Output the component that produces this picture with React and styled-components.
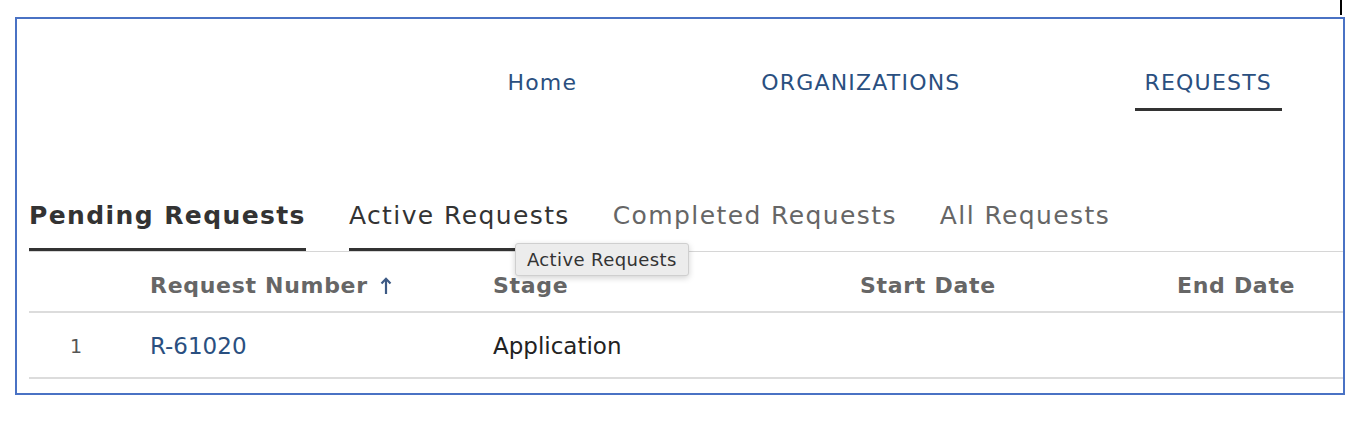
import React from "react";
import styled, { createGlobalStyle } from "styled-components";

const GlobalStyle = createGlobalStyle`
  body {
    margin: 0;
    background: #fff;
    font-family: "DejaVu Sans", Verdana, sans-serif;
  }
`;

const navItems = [
  { label: "Home" },
  { label: "ORGANIZATIONS" },
  { label: "REQUESTS", active: true },
];

const tabs = [
  { label: "Pending Requests", state: "selected" },
  { label: "Active Requests", state: "hover", tooltip: true },
  { label: "Completed Requests" },
  { label: "All Requests" },
];

const columns = ["", "Request Number", "Stage", "Start Date", "End Date"];

const rows = [{ index: 1, number: "R-61020", stage: "Application", start: "", end: "" }];

function SortArrow() {
  return (
    <svg width="14" height="18" viewBox="0 0 14 18" fill="none">
      <path d="M7 17V2" stroke="#3d5a85" strokeWidth="2.2" />
      <path d="M2.5 6.5L7 1.8l4.5 4.7" stroke="#3d5a85" strokeWidth="2.2" fill="none" />
    </svg>
  );
}

export default function App() {
  return (
    <>
      <GlobalStyle />
      <Caret />
      <Frame>
        <Nav>
          {navItems.map((item) => (
            <NavItem key={item.label} active={item.active}>
              {item.label}
            </NavItem>
          ))}
        </Nav>
        <Tabs>
          {tabs.map((tab) => (
            <Tab key={tab.label} state={tab.state}>
              {tab.label}
              {tab.tooltip && <Tooltip>{tab.label}</Tooltip>}
            </Tab>
          ))}
        </Tabs>
        <Table>
          <HeadRow>
            {columns.map((col, i) => (
              <HeadCell key={i}>
                {col}
                {col === "Request Number" && <SortArrow />}
              </HeadCell>
            ))}
          </HeadRow>
          {rows.map((row) => (
            <Row key={row.number}>
              <IndexCell>{row.index}</IndexCell>
              <LinkCell>{row.number}</LinkCell>
              <Cell>{row.stage}</Cell>
              <Cell>{row.start}</Cell>
              <Cell>{row.end}</Cell>
            </Row>
          ))}
        </Table>
      </Frame>
    </>
  );
}

const Caret = styled.div`
  position: absolute;
  top: 0;
  left: 1340px;
  width: 2px;
  height: 15px;
  background: #000;
`;

const Frame = styled.div`
  box-sizing: border-box;
  width: 1330px;
  margin: 17px 0 0 15px;
  border: 2px solid #4a72c4;
  padding: 0 0 14px 12px;
`;

const Nav = styled.nav`
  display: flex;
  justify-content: flex-end;
  gap: 164px;
  padding: 51px 61px 0 0;
  height: 94px;
  box-sizing: border-box;
`;

const NavItem = styled.a`
  padding: 0 10px;
  height: 41px;
  box-sizing: border-box;
  font-size: 22px;
  line-height: 25px;
  letter-spacing: 1.2px;
  color: #2a4f80;
  border-bottom: 3px solid ${(p) => (p.active ? "#333" : "transparent")};
  cursor: pointer;
`;

const Tabs = styled.div`
  display: flex;
  gap: 43px;
  margin-top: 89px;
  border-bottom: 1px solid #d6d6d6;
`;

const Tab = styled.div`
  position: relative;
  padding-bottom: 18px;
  font-size: 25px;
  line-height: 28px;
  letter-spacing: 1.4px;
  font-weight: ${(p) => (p.state === "selected" ? 700 : 400)};
  color: ${(p) => (p.state ? "#333" : "#666")};
  border-bottom: 3px solid ${(p) => (p.state ? "#333" : "transparent")};
`;

const Tooltip = styled.div`
  position: absolute;
  left: 166px;
  top: calc(100% - 5px);
  padding: 5px 11px 5px;
  font-size: 18px;
  line-height: 21px;
  font-weight: 400;
  letter-spacing: 0.4px;
  color: #333;
  background: #ececec;
  border: 1px solid #cfcfcf;
  border-radius: 3px;
  box-shadow: 0 2px 6px rgba(0, 0, 0, 0.18);
  white-space: nowrap;
`;

const Table = styled.div`
  display: grid;
  grid-template-columns: 121px 343px 367px 317px 1fr;
`;

const HeadRow = styled.div`
  display: contents;
`;

const HeadCell = styled.div`
  display: flex;
  align-items: center;
  gap: 11px;
  box-sizing: border-box;
  height: 61px;
  padding-top: 8px;
  font-size: 22px;
  letter-spacing: 0.7px;
  font-weight: 700;
  color: #666;
  border-bottom: 2px solid #dcdcdc;
`;

const Row = styled.div`
  display: contents;
`;

const Cell = styled.div`
  display: flex;
  align-items: center;
  box-sizing: border-box;
  height: 66px;
  padding-top: 2px;
  font-size: 23px;
  color: #222;
  border-bottom: 2px solid #dcdcdc;
`;

const IndexCell = styled(Cell)`
  justify-content: center;
  padding-right: 27px;
  font-size: 19px;
  color: #555;
`;

const LinkCell = styled(Cell)`
  color: #2a4f80;
  cursor: pointer;
`;
